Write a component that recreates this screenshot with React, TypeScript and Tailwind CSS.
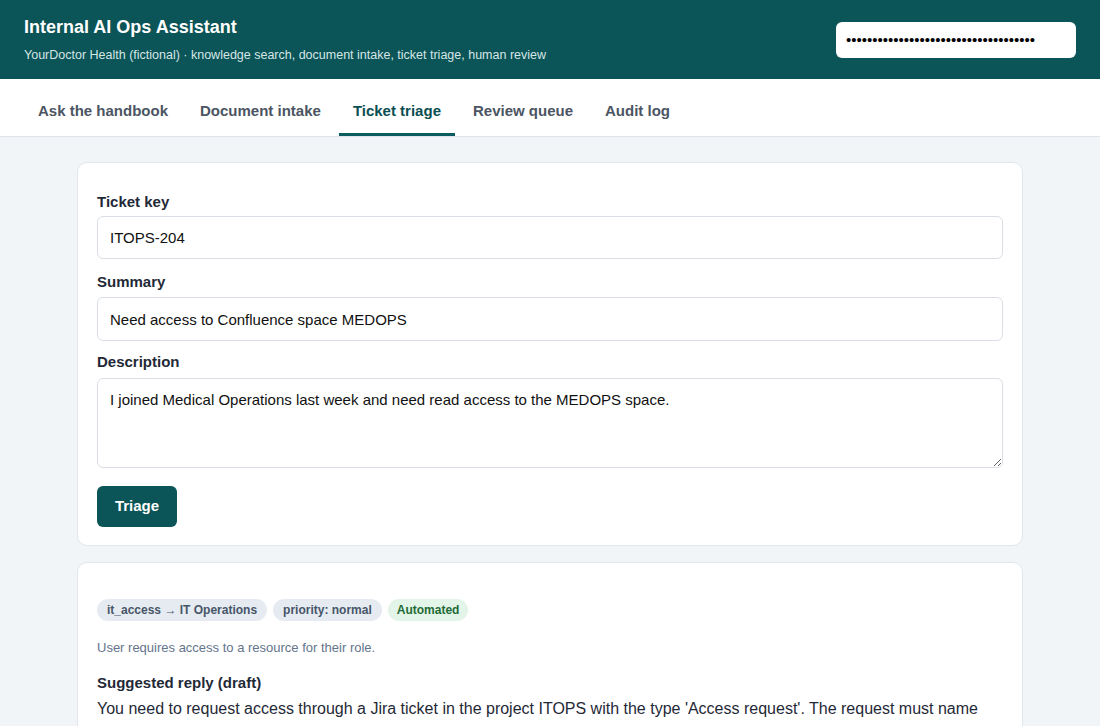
import { useState } from "react";

const tabs = ["Ask the handbook", "Document intake", "Ticket triage", "Review queue", "Audit log"];

export default function App() {
  const [active, setActive] = useState("Ticket triage");
  const [key, setKey] = useState("ITOPS-204");
  const [summary, setSummary] = useState("Need access to Confluence space MEDOPS");
  const [description, setDescription] = useState(
    "I joined Medical Operations last week and need read access to the MEDOPS space."
  );

  return (
    <div className="min-h-screen bg-[#f2f5f8] font-['Liberation_Sans',Arial,sans-serif] text-[#1f2937]">
      {/* Header */}
      <header className="h-[79px] bg-[#0b5457] text-white flex items-center justify-between pl-6 pr-6">
        <div className="pt-[1px]">
          <h1 className="text-[18px] font-bold leading-6">Internal AI Ops Assistant</h1>
          <p className="text-[12.5px] text-[#d5e6e6] mt-[7px]">
            YourDoctor Health (fictional) · knowledge search, document intake, ticket triage, human review
          </p>
        </div>
        <input
          type="password"
          defaultValue="sk-demo-0000000000000000000000000000"
          className="w-[240px] h-[36px] rounded-md bg-white text-black px-[10px] text-[15px] outline-none"
        />
      </header>

      {/* Tabs */}
      <nav className="h-[58px] bg-white border-b border-[#dfe4ea] flex items-stretch gap-1 px-6">
        {tabs.map((t) => (
          <button
            key={t}
            onClick={() => setActive(t)}
            className={
              "px-[14px] text-[15px] font-bold border-b-[3px] pt-[11px] " +
              (active === t ? "text-[#0b4f52] border-[#0b5c5e]" : "text-[#4b5563] border-transparent")
            }
          >
            {t}
          </button>
        ))}
      </nav>

      <main className="w-[946px] mx-auto pt-[25px] pb-6 flex flex-col gap-[16px]">
        {/* Form card */}
        <section className="bg-white border border-[#e1e6ec] rounded-[10px] px-[19px] pt-[30px] pb-[18px]">
          <label className="block text-[15px] font-bold text-[#1f2937] leading-[18px]">Ticket key</label>
          <input
            value={key}
            onChange={(e) => setKey(e.target.value)}
            className="mt-[5px] w-full h-[43px] border border-[#dadfe5] rounded-md px-3 text-[15px] text-[#111] outline-none"
          />
          <label className="block mt-[14px] text-[15px] font-bold leading-[18px]">Summary</label>
          <input
            value={summary}
            onChange={(e) => setSummary(e.target.value)}
            className="mt-[6px] w-full h-[44px] border border-[#dadfe5] rounded-md px-3 text-[15px] text-[#111] outline-none"
          />
          <label className="block mt-[12px] text-[15px] font-bold leading-[18px]">Description</label>
          <textarea
            value={description}
            onChange={(e) => setDescription(e.target.value)}
            className="block mt-[7px] w-full h-[90px] border border-[#dadfe5] rounded-md px-3 pt-[10px] text-[15px] text-[#111] outline-none"
          />
          <button className="mt-[18px] w-[80px] h-[41px] rounded-md bg-[#0b5457] text-white text-[15px] font-bold">
            Triage
          </button>
        </section>

        {/* Result card */}
        <section className="bg-white border border-[#e1e6ec] rounded-[10px] px-[19px] pt-[36px] pb-6">
          <div className="flex gap-[6px]">
            <span className="h-[22px] flex items-center px-[10px] rounded-full bg-[#e6ebf1] text-[12px] font-bold text-[#475569]">
              it_access → IT Operations
            </span>
            <span className="h-[22px] flex items-center px-[10px] rounded-full bg-[#e6ebf1] text-[12px] font-bold text-[#475569]">
              priority: normal
            </span>
            <span className="h-[22px] flex items-center px-[9px] rounded-full bg-[#e3f4e8] text-[12px] font-bold text-[#1e6b36]">
              Automated
            </span>
          </div>
          <p className="mt-[17px] text-[13px] text-[#64748b]">User requires access to a resource for their role.</p>
          <h3 className="mt-[14px] text-[15px] font-bold">Suggested reply (draft)</h3>
          <p className="mt-[1px] text-[16px] leading-[27px] text-[#1f2937]">
            You need to request access through a Jira ticket in the project ITOPS with the type 'Access request'. The
            request must name the space and the level of access you need, and your line manager must approve it.
          </p>
        </section>
      </main>
    </div>
  );
}
